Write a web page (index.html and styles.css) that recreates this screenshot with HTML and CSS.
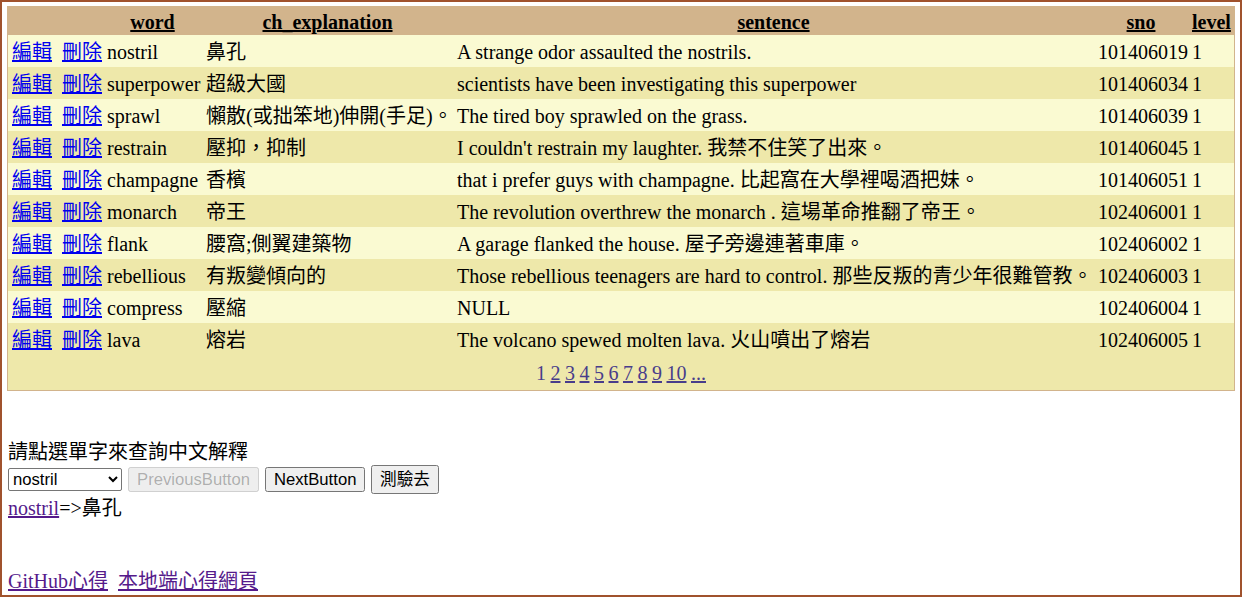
FILE: index.html
```html
<!DOCTYPE html>
<html lang="zh-Hant">
<head>
<meta charset="utf-8">
<title>單字表</title>
<link rel="stylesheet" href="styles.css">
</head>
<body>
<div class="frame">
  <table class="grid">
    <thead>
      <tr>
        <th class="c-act"></th>
        <th class="c-word"><a href="#">word</a></th>
        <th class="c-ch"><a href="#">ch_explanation</a></th>
        <th class="c-sent"><a href="#">sentence</a></th>
        <th class="c-sno"><a href="#">sno</a></th>
        <th class="c-level"><a href="#">level</a></th>
      </tr>
    </thead>
    <tbody>
      <tr><td><a class="cmd" href="#">編輯</a><a class="cmd cmd-del" href="#">刪除</a></td><td>nostril</td><td>鼻孔</td><td>A strange odor assaulted the nostrils.</td><td>101406019</td><td>1</td></tr>
      <tr><td><a class="cmd" href="#">編輯</a><a class="cmd cmd-del" href="#">刪除</a></td><td>superpower</td><td>超級大國</td><td>scientists have been investigating this superpower</td><td>101406034</td><td>1</td></tr>
      <tr><td><a class="cmd" href="#">編輯</a><a class="cmd cmd-del" href="#">刪除</a></td><td>sprawl</td><td>懶散(或拙笨地)伸開(手足)。</td><td>The tired boy sprawled on the grass.</td><td>101406039</td><td>1</td></tr>
      <tr><td><a class="cmd" href="#">編輯</a><a class="cmd cmd-del" href="#">刪除</a></td><td>restrain</td><td>壓抑，抑制</td><td>I couldn't restrain my laughter. 我禁不住笑了出來。</td><td>101406045</td><td>1</td></tr>
      <tr><td><a class="cmd" href="#">編輯</a><a class="cmd cmd-del" href="#">刪除</a></td><td>champagne</td><td>香檳</td><td>that i prefer guys with champagne. 比起窩在大學裡喝酒把妹。</td><td>101406051</td><td>1</td></tr>
      <tr><td><a class="cmd" href="#">編輯</a><a class="cmd cmd-del" href="#">刪除</a></td><td>monarch</td><td>帝王</td><td>The revolution overthrew the monarch . 這場革命推翻了帝王。</td><td>102406001</td><td>1</td></tr>
      <tr><td><a class="cmd" href="#">編輯</a><a class="cmd cmd-del" href="#">刪除</a></td><td>flank</td><td>腰窩;側翼建築物</td><td>A garage flanked the house. 屋子旁邊連著車庫。</td><td>102406002</td><td>1</td></tr>
      <tr><td><a class="cmd" href="#">編輯</a><a class="cmd cmd-del" href="#">刪除</a></td><td>rebellious</td><td>有叛變傾向的</td><td>Those rebellious teenagers are hard to control. 那些反叛的青少年很難管教。</td><td>102406003</td><td>1</td></tr>
      <tr><td><a class="cmd" href="#">編輯</a><a class="cmd cmd-del" href="#">刪除</a></td><td>compress</td><td>壓縮</td><td>NULL</td><td>102406004</td><td>1</td></tr>
      <tr><td><a class="cmd" href="#">編輯</a><a class="cmd cmd-del" href="#">刪除</a></td><td>lava</td><td>熔岩</td><td>The volcano spewed molten lava. 火山噴出了熔岩</td><td>102406005</td><td>1</td></tr>
    </tbody>
    <tfoot>
      <tr class="pager">
        <td colspan="6">
          <div class="pages">
            <span>1</span><a href="#">2</a><a href="#">3</a><a href="#">4</a><a href="#">5</a><a href="#">6</a><a href="#">7</a><a href="#">8</a><a href="#">9</a><a href="#">10</a><a href="#">...</a>
          </div>
        </td>
      </tr>
    </tfoot>
  </table>

  <div class="query">
    <div class="label">請點選單字來查詢中文解釋</div>
    <div class="controls">
      <select class="word-select">
        <option>nostril</option>
        <option>superpower</option>
        <option>sprawl</option>
      </select>
      <button class="btn btn-prev" disabled>PreviousButton</button>
      <button class="btn btn-next">NextButton</button>
      <button class="btn btn-quiz">測驗去</button>
    </div>
    <div class="result"><a class="visited" href="#">nostril</a>=&gt;鼻孔</div>
    <div class="links"><a class="visited" href="#">GitHub心得</a><a class="visited link-gap" href="#">本地端心得網頁</a></div>
  </div>
</div>
</body>
</html>
```

FILE: styles.css
```css
html, body {
  margin: 0;
  padding: 0;
  background: #fff;
}

body {
  font-family: "Liberation Serif", "Noto Sans CJK TC", serif;
  font-size: 20px;
  line-height: 24px;
  color: #000;
}

.frame {
  box-sizing: border-box;
  width: 1242px;
  height: 597px;
  border: 2px solid #a0522d;
  padding: 4px 5px 0;
  overflow: hidden;
}

/* GridView */
.grid {
  width: 1228px;
  border: 1px solid #d2b48c;
  border-collapse: separate;
  border-spacing: 0;
  background: #fafad2;
  table-layout: fixed;
}

.grid th,
.grid td {
  box-sizing: border-box;
  padding: 5px 4px 3px;
  white-space: nowrap;
  text-align: left;
  vertical-align: middle;
}

.grid th {
  background: #d2b48c;
  font-weight: bold;
  text-align: center;
  line-height: 20px;
}

.grid th a {
  color: #000;
}

.c-act { width: 95px; }
.c-word { width: 99px; }
.c-ch { width: 251px; }
.c-sent { width: 641px; }
.c-sno { width: 94px; }
.c-level { width: 46px; }

.grid td {
  line-height: 24px;
}

.grid tbody tr:nth-child(even) td {
  background: #eee8aa;
}

.cmd {
  color: #0000ee;
}

.cmd-del {
  margin-left: 10px;
}

.grid .pager td {
  background: #eee8aa;
  color: #483d8b;
  text-align: center;
  padding: 6px 4px 5px;
}

.pages {
  display: inline-flex;
  gap: 4.5px;
}

.pages a {
  color: #483d8b;
}

/* lower section */
.query {
  margin-top: 49px;
  padding-left: 1px;
}

.label {
  line-height: 24px;
}

.controls {
  display: flex;
  align-items: center;
  gap: 6px;
  height: 30px;
  margin-bottom: 2px;
}

.word-select {
  box-sizing: border-box;
  width: 114px;
  height: 23px;
  margin: 0;
  font-family: "Liberation Sans", "Noto Sans CJK TC", sans-serif;
  font-size: 16.67px;
  color: #000;
  background: #fff;
  border: 1px solid #767676;
  border-radius: 2px;
}

.btn {
  box-sizing: border-box;
  height: 25px;
  margin: 0;
  padding: 0 7px;
  font-family: "Liberation Sans", "Noto Sans CJK TC", sans-serif;
  font-size: 16.67px;
  line-height: 19px;
}

.btn-prev { width: 131px; }
.btn-next { width: 100px; }
.btn-quiz { width: 68px; height: 29px; }

.result {
  line-height: 24px;
}

.visited {
  color: #551a8b;
}

.links {
  margin-top: 49px;
  line-height: 24px;
}

.link-gap {
  margin-left: 10px;
}
```
